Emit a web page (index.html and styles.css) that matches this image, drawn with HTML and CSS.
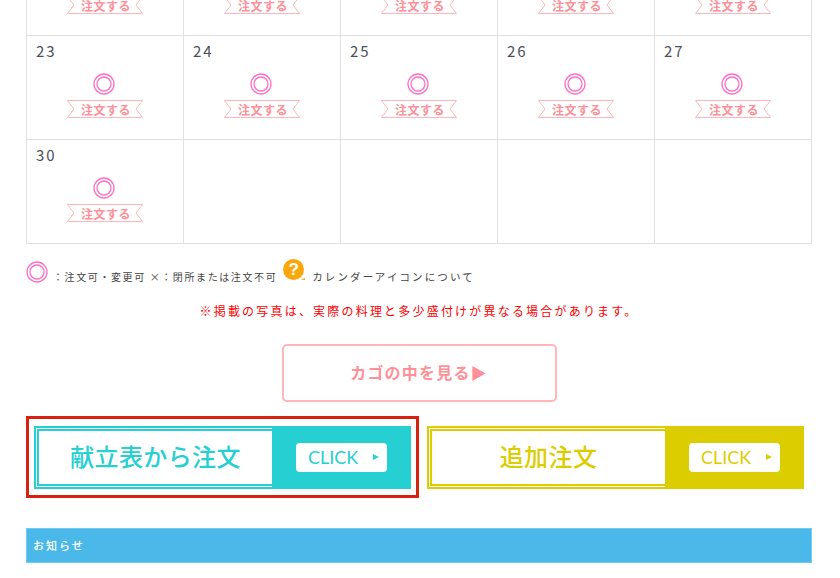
FILE: index.html
```html
<!DOCTYPE html>
<html lang="ja">
<head>
    <meta charset="UTF-8">
    <title>注文カレンダー</title>
    <link rel="stylesheet" href="styles.css">
</head>
<body>
    <div class="page">
        <table class="calendar">
            <tr>
                <td><div class="day"></div><a class="order"><svg class="mark" viewBox="0 0 22 22"><circle cx="11" cy="11" r="10"/><circle cx="11" cy="11" r="7"/></svg><span class="ribbon"><svg viewBox="0 0 76 18"><path d="M.5.5h75l-6.500 8.500 6.500 8.500H.5L7 9z"/></svg><span>注文する</span></span></a></td>
                <td><div class="day"></div><a class="order"><svg class="mark" viewBox="0 0 22 22"><circle cx="11" cy="11" r="10"/><circle cx="11" cy="11" r="7"/></svg><span class="ribbon"><svg viewBox="0 0 76 18"><path d="M.5.5h75l-6.500 8.500 6.500 8.500H.5L7 9z"/></svg><span>注文する</span></span></a></td>
                <td><div class="day"></div><a class="order"><svg class="mark" viewBox="0 0 22 22"><circle cx="11" cy="11" r="10"/><circle cx="11" cy="11" r="7"/></svg><span class="ribbon"><svg viewBox="0 0 76 18"><path d="M.5.5h75l-6.500 8.500 6.500 8.500H.5L7 9z"/></svg><span>注文する</span></span></a></td>
                <td><div class="day"></div><a class="order"><svg class="mark" viewBox="0 0 22 22"><circle cx="11" cy="11" r="10"/><circle cx="11" cy="11" r="7"/></svg><span class="ribbon"><svg viewBox="0 0 76 18"><path d="M.5.5h75l-6.500 8.500 6.500 8.500H.5L7 9z"/></svg><span>注文する</span></span></a></td>
                <td><div class="day"></div><a class="order"><svg class="mark" viewBox="0 0 22 22"><circle cx="11" cy="11" r="10"/><circle cx="11" cy="11" r="7"/></svg><span class="ribbon"><svg viewBox="0 0 76 18"><path d="M.5.5h75l-6.500 8.500 6.500 8.500H.5L7 9z"/></svg><span>注文する</span></span></a></td>
            </tr>
            <tr>
                <td><div class="day">23</div><a class="order"><svg class="mark" viewBox="0 0 22 22"><circle cx="11" cy="11" r="10"/><circle cx="11" cy="11" r="7"/></svg><span class="ribbon"><svg viewBox="0 0 76 18"><path d="M.5.5h75l-6.500 8.500 6.500 8.500H.5L7 9z"/></svg><span>注文する</span></span></a></td>
                <td><div class="day">24</div><a class="order"><svg class="mark" viewBox="0 0 22 22"><circle cx="11" cy="11" r="10"/><circle cx="11" cy="11" r="7"/></svg><span class="ribbon"><svg viewBox="0 0 76 18"><path d="M.5.5h75l-6.500 8.500 6.500 8.500H.5L7 9z"/></svg><span>注文する</span></span></a></td>
                <td><div class="day">25</div><a class="order"><svg class="mark" viewBox="0 0 22 22"><circle cx="11" cy="11" r="10"/><circle cx="11" cy="11" r="7"/></svg><span class="ribbon"><svg viewBox="0 0 76 18"><path d="M.5.5h75l-6.500 8.500 6.500 8.500H.5L7 9z"/></svg><span>注文する</span></span></a></td>
                <td><div class="day">26</div><a class="order"><svg class="mark" viewBox="0 0 22 22"><circle cx="11" cy="11" r="10"/><circle cx="11" cy="11" r="7"/></svg><span class="ribbon"><svg viewBox="0 0 76 18"><path d="M.5.5h75l-6.500 8.500 6.500 8.500H.5L7 9z"/></svg><span>注文する</span></span></a></td>
                <td><div class="day">27</div><a class="order"><svg class="mark" viewBox="0 0 22 22"><circle cx="11" cy="11" r="10"/><circle cx="11" cy="11" r="7"/></svg><span class="ribbon"><svg viewBox="0 0 76 18"><path d="M.5.5h75l-6.500 8.500 6.500 8.500H.5L7 9z"/></svg><span>注文する</span></span></a></td>
            </tr>
            <tr>
                <td><div class="day">30</div><a class="order"><svg class="mark" viewBox="0 0 22 22"><circle cx="11" cy="11" r="10"/><circle cx="11" cy="11" r="7"/></svg><span class="ribbon"><svg viewBox="0 0 76 18"><path d="M.5.5h75l-6.500 8.500 6.500 8.500H.5L7 9z"/></svg><span>注文する</span></span></a></td>
                <td></td>
                <td></td>
                <td></td>
                <td></td>
            </tr>
        </table>

        <!-- 凡例 -->
        <div class="legend">
            <svg class="mark legend-mark" viewBox="0 0 22 22"><circle cx="11" cy="11" r="10"/><circle cx="11" cy="11" r="7"/></svg>
            <span class="legend-text">：注文可・変更可 ×：閉所または注文不可</span>
            <span class="help-icon">?</span>
            <span class="legend-text legend-link">カレンダーアイコンについて</span>
        </div>

        <p class="notice-text">※掲載の写真は、実際の料理と多少盛付けが異なる場合があります。</p>

        <a class="cart-button">カゴの中を見る▶</a>

        <div class="menu-buttons">
            <a class="menu-button teal selected">
                <span class="menu-label">献立表から注文</span>
                <span class="menu-side"><span class="click">CLICK<i></i></span></span>
            </a>
            <a class="menu-button yellow">
                <span class="menu-label">追加注文</span>
                <span class="menu-side"><span class="click">CLICK<i></i></span></span>
            </a>
        </div>

        <h2 class="news-title">お知らせ</h2>
    </div>
</body>
</html>
```

FILE: styles.css
```css
html, body {
    height: 578px;
    overflow: hidden;
}

body {
    margin: 0;
    background: #fff;
    color: #444;
    font-family: "Noto Sans CJK JP", "Liberation Sans", sans-serif;
}

.page {
    width: 786px;
    margin: -69px 0 0 26px;
}

/* カレンダー */
.calendar {
    width: 786px;
    table-layout: fixed;
    border-collapse: collapse;
}

.calendar td {
    height: 103px;
    padding: 0;
    border: 1px solid #e2e2e2;
    vertical-align: top;
}

.day {
    height: 37px;
    padding: 5px 0 0 9px;
    box-sizing: border-box;
    font-size: 15px;
    line-height: 20px;
    letter-spacing: 2px;
    color: #4a4f5a;
}

.order {
    display: flex;
    flex-direction: column;
    align-items: center;
    gap: 5px;
}

.mark {
    display: block;
    width: 22px;
    height: 22px;
    fill: none;
    stroke: #ff6ec4;
    stroke-width: 1.3;
}

.order .mark {
    margin-right: 2px;
}

.ribbon {
    display: grid;
    width: 76px;
    height: 18px;
    color: #ff9098;
    font-size: 12px;
    font-weight: 700;
    line-height: 19px;
    text-align: center;
    letter-spacing: .5px;
}

.ribbon > * {
    grid-area: 1 / 1;
}

.ribbon span {
    padding-left: 2px;
}

.ribbon svg {
    width: 76px;
    height: 18px;
    fill: none;
    stroke: #ffb5ba;
}

/* 凡例 */
.legend {
    display: flex;
    align-items: center;
    height: 24px;
    margin-top: 16px;
}

.legend-text {
    margin-top: 8px;
    font-size: 10px;
    letter-spacing: 1.6px;
    color: #444;
}

.legend-link {
    font-size: 10.500px;
    letter-spacing: 2.100px;
}

.legend-mark {
    margin-right: 5px;
}

.help-icon {
    position: relative;
    width: 21px;
    height: 21px;
    margin: -5px 8px 0 6px;
    border-radius: 50%;
    background: #f9a80b;
    color: #fff;
    font-family: "Liberation Sans", sans-serif;
    font-size: 17px;
    font-weight: 700;
    line-height: 21px;
    text-align: center;
}

/* 吹き出しの尻尾 */
.help-icon::after {
    content: "";
    position: absolute;
    right: -1px;
    bottom: 0;
    border-left: 4px solid transparent;
    border-bottom: 2px solid #f9a80b;
}

.notice-text {
    margin: 17px 0 0;
    font-size: 12px;
    line-height: 20px;
    letter-spacing: 2.200px;
    text-align: center;
    color: #f00;
}

.cart-button {
    display: block;
    width: 275px;
    height: 58px;
    margin: 23px auto 0;
    box-sizing: border-box;
    border: 2px solid #ffb5ba;
    border-radius: 5px;
    color: #ff9098;
    font-size: 16px;
    font-weight: 700;
    line-height: 53px;
    letter-spacing: 1.200px;
    text-align: center;
}

/* 献立ボタン */
.menu-buttons {
    display: flex;
    margin-top: 14px;
}

.menu-button {
    display: flex;
    width: 393px;
    height: 82px;
    box-sizing: border-box;
    padding: 7px 5px 6px;
    border: 3px solid transparent;
}

.menu-button.selected {
    border-color: #d8210f;
}

.teal {
    --main: #26cfd2;
}

.yellow {
    --main: #dccd00;
}

.menu-label {
    width: 238px;
    box-sizing: border-box;
    border: 5px double var(--main);
    border-right: 0;
    background: #fff;
    color: var(--main);
    font-size: 24px;
    font-weight: 500;
    line-height: 50px;
    letter-spacing: .4px;
    text-align: center;
}

.menu-side {
    display: flex;
    flex: 1;
    align-items: center;
    justify-content: center;
    background: var(--main);
}

.click {
    display: flex;
    align-items: center;
    width: 91px;
    height: 29px;
    padding: 0 0 2px 12px;
    box-sizing: border-box;
    border-radius: 4px;
    background: #fff;
    color: var(--main);
    font-family: Lato, "Liberation Sans", sans-serif;
    font-size: 18px;
}

.click i {
    margin-left: 15px;
    border-left: 6px solid var(--main);
    border-top: 3.500px solid transparent;
    border-bottom: 3.500px solid transparent;
}

.news-title {
    height: 35px;
    margin: 30px 0 0;
    padding-left: 6px;
    box-sizing: border-box;
    border: 1px solid #6fcbf0;
    background: #4ab8e8;
    color: #fff;
    font-size: 11px;
    font-weight: 500;
    line-height: 33px;
    letter-spacing: 2px;
}
```
